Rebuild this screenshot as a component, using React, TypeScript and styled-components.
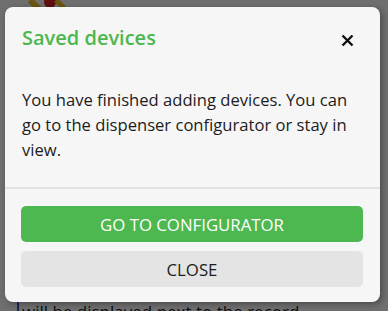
import React from "react";
import styled, { createGlobalStyle } from "styled-components";

const Global = createGlobalStyle`
  html, body { margin: 0; padding: 0; }
  body { width: 388px; height: 311px; overflow: hidden; font-family: "Open Sans", "Noto Sans", sans-serif; }
`;

const Page = styled.div`
  position: relative;
  width: 388px;
  height: 311px;
  overflow: hidden;
  background: #e9e9e9;
`;

const Behind = styled.div`
  height: 100%;
  display: flex;
  flex-direction: column;
  justify-content: flex-end;
  padding: 0 0 0 17px;
  box-sizing: border-box;
`;

const BehindText = styled.div`
  border-left: 2px solid #1f5fbf;
  padding-left: 3px;
  font-size: 17px;
  line-height: 22px;
  color: #1a1a2a;
  height: 22px;
  overflow: hidden;
  margin-bottom: -12px;
`;

const Deco = styled.svg`
  position: absolute;
  left: 28px;
  top: 0;
`;

const Overlay = styled.div`
  position: absolute;
  inset: 0;
  background: rgba(0, 0, 0, 0.52);
`;

const Dialog = styled.div`
  position: absolute;
  left: 5px;
  top: 7px;
  width: 375px;
  height: 295px;
  background: #f6f6f6;
  border-radius: 8px;
  box-shadow: 2px 2px 6px rgba(0, 0, 0, 0.35);
  display: flex;
  flex-direction: column;
  box-sizing: border-box;
`;

const Header = styled.div`
  display: flex;
  justify-content: space-between;
  align-items: flex-start;
  padding: 17px 25px 0 17px;
`;

const Title = styled.h2`
  margin: 0;
  font-size: 20px;
  line-height: 28px;
  font-weight: 600;
  color: #4cb64f;
`;

const CloseX = styled.button`
  border: 0;
  background: none;
  padding: 0;
  margin-top: 10px;
  width: 14px;
  height: 14px;
  cursor: pointer;
  display: flex;
`;

const Body = styled.p`
  margin: 0;
  padding: 35px 24px 0 17px;
  font-size: 16.6px;
  line-height: 25px;
  color: #1c1c1c;
  height: 135px;
  box-sizing: border-box;
`;

const Divider = styled.hr`
  margin: 0;
  border: 0;
  border-top: 2px solid #e3e3e3;
`;

const Footer = styled.div`
  display: grid;
  gap: 9px;
  padding: 17px 17px 15px 16px;
`;

const Button = styled.button<{ $primary?: boolean }>`
  height: 36px;
  border: 0;
  border-radius: 5px;
  font-family: inherit;
  font-size: 16.8px;
  text-transform: uppercase;
  background: ${(p) => (p.$primary ? "#4cb84f" : "#e4e4e4")};
  color: ${(p) => (p.$primary ? "#ffffff" : "#1c1c1c")};
  cursor: pointer;
`;

export default function App() {
  return (
    <Page>
      <Global />
      <Behind>
        <BehindText>will be displayed next to the record</BehindText>
      </Behind>
      <Deco width="40" height="10" viewBox="0 0 40 10">
        <path d="M2 0 L12 10" stroke="#e0b020" strokeWidth="6" />
        <circle cx="22" cy="2" r="6" fill="#c62020" />
        <path d="M28 0 L36 8" stroke="#e0b020" strokeWidth="5" />
      </Deco>
      <Overlay />
      <Dialog>
        <Header>
          <Title>Saved devices</Title>
          <CloseX aria-label="close">
            <svg width="13" height="13" viewBox="0 0 13 13">
              <path d="M1.5 1.5 L11.5 11.5 M11.5 1.5 L1.5 11.5" stroke="#111" strokeWidth="2.4" strokeLinecap="butt" />
            </svg>
          </CloseX>
        </Header>
        <Body>
          You have finished adding devices. You can go to the dispenser configurator or stay in view.
        </Body>
        <Divider />
        <Footer>
          <Button $primary>Go to configurator</Button>
          <Button>Close</Button>
        </Footer>
      </Dialog>
    </Page>
  );
}
